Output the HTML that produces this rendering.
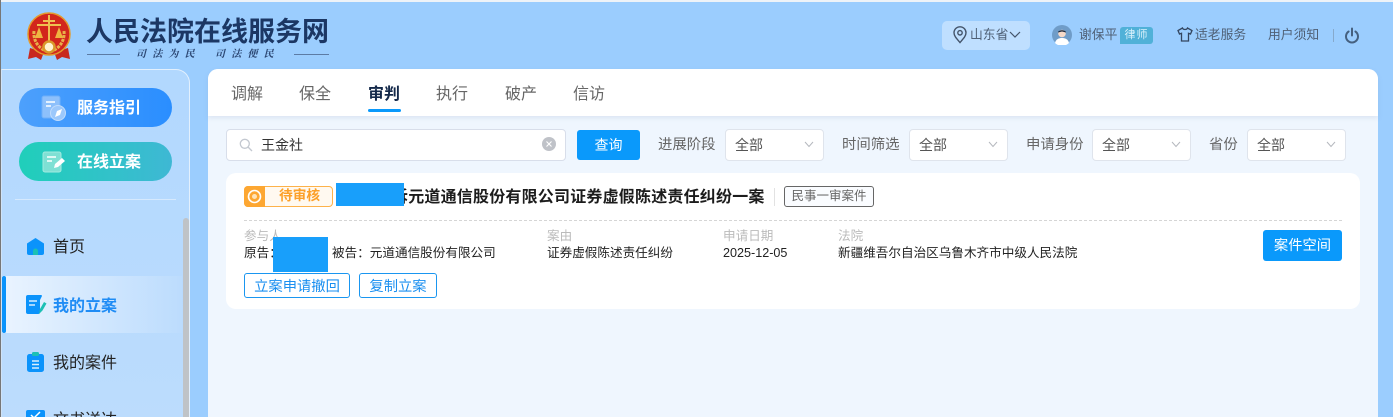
<!DOCTYPE html>
<html lang="zh"><head><meta charset="utf-8"><title>人民法院在线服务网</title>
<style>
*{box-sizing:border-box;margin:0;padding:0}
html,body{width:1393px;height:417px;overflow:hidden}
body{position:relative;background:#9bcdfe;font-family:"Liberation Sans","Noto Sans CJK SC",sans-serif;color:#222}
.a{position:absolute;white-space:nowrap}
.t{font-size:12.6px;line-height:18px}
.h{font-size:12.8px;color:#4f6076}
.sel{position:absolute;top:129px;width:99px;height:32px;background:#fff;border:1px solid #dfe4ec;border-radius:4px;font-size:14px;line-height:30px;padding-left:9px;color:#555}
.sel svg{position:absolute;right:9px;top:11px}
.lab{position:absolute;top:136px;font-size:14.4px;line-height:18px;color:#666}
.tab{position:absolute;top:84px;font-size:16px;line-height:22px;color:#666}
.g{color:#bbb}
.nav{font-size:16px;line-height:21px;color:#222}
</style></head><body>
<div class="a" style="left:0;top:0;width:1393px;height:2px;background:#eef3f8"></div>
<div class="a" style="left:0;top:0;width:1px;height:417px;background:#777"></div>

<svg class="a" style="left:27px;top:11px" width="44" height="50" viewBox="0 0 44 50">
<path d="M3 37l-2 11 8-2 5 3 3-8zM41 37l2 11-8-2-5 3-3-8z" fill="#c8281e"/>
<circle cx="22" cy="23" r="21" fill="#d2261c"/><circle cx="22" cy="23" r="21" fill="none" stroke="#e49a2c" stroke-width="1.500"/>
<path d="M7 20c-1 9 4 17 12 20M37 20c1 9-4 17-12 20" fill="none" stroke="#e8b04a" stroke-width="3" stroke-dasharray="3 1"/>
<path d="M21 4h2v5h5v2h-5v21h-2V11h-5V9h5zM10 13h24v2H10z" fill="#efc050"/>
<path d="M8 27l4-11 4 11zM28 27l4-11 4 11z" fill="#efb440"/>
<circle cx="22" cy="36" r="5.500" fill="#fff3d0" stroke="#d9982a" stroke-width="2.500"/>
</svg>

<div class="a" style="left:86px;top:16px;font-size:27px;line-height:32px;font-weight:700;color:#1c3764">人民法院在线服务网</div>
<div class="a" style="left:87px;top:54px;width:33px;height:1px;background:#5c7ba4"></div>
<div class="a" style="left:294px;top:54px;width:35px;height:1px;background:#5c7ba4"></div>
<div class="a" style="left:136px;top:48px;font-size:10px;line-height:14px;font-weight:700;font-style:italic;color:#2b4672;font-family:'Liberation Serif','Noto Serif CJK SC',serif;letter-spacing:6.2px">司法为民</div>
<div class="a" style="left:215px;top:48px;font-size:10px;line-height:14px;font-weight:700;font-style:italic;color:#2b4672;font-family:'Liberation Serif','Noto Serif CJK SC',serif;letter-spacing:6.2px">司法便民</div>

<div class="a" style="left:942px;top:21px;width:88px;height:29px;border-radius:5px;background:#bfdfff"></div>
<svg class="a" style="left:952px;top:26px" width="16" height="18" viewBox="0 0 16 18" fill="none" stroke="#44546a" stroke-width="1.400"><path d="M8 16.500C4.500 12.500 2 10 2 6.800a6 6 0 0 1 12 0C14 10 11.500 12.500 8 16.500z"/><circle cx="8" cy="6.800" r="2.200"/></svg>
<div class="a t h" style="left:970px;top:26px">山东省</div>
<svg class="a" style="left:1009px;top:31px" width="12" height="8" viewBox="0 0 12 8" fill="none" stroke="#44546a" stroke-width="1.200"><path d="M1 1l5 5 5-5"/></svg>

<svg class="a" style="left:1052px;top:25px" width="20" height="20" viewBox="0 0 20 20"><circle cx="10" cy="10" r="10" fill="#6f9cc8"/><path d="M3 18c1-4 4-5 7-5s6 1 7 5a10 10 0 0 1-14 0z" fill="#fff"/><circle cx="10" cy="8.500" r="3.800" fill="#f6d9c8"/><path d="M6 7.500C6 4.500 14 4.500 14 7.500L10 6.500z" fill="#1f2c3f"/></svg>
<div class="a t h" style="left:1079px;top:26px">谢保平</div>
<div class="a" style="left:1120px;top:27px;width:33px;height:17px;background:#50b1d8;border-radius:3px 3px 3px 0;color:#d8f1fb;font-size:11px;line-height:17px;text-align:center;letter-spacing:1px">律师</div>

<svg class="a" style="left:1177px;top:27px" width="16" height="15" viewBox="0 0 16 15" fill="none" stroke="#33455f" stroke-width="1.300"><path d="M5.500 1L1 3.500 2.500 7l2-.7V14h7V6.300l2 .7L15 3.500 10.500 1C10 3 6 3 5.500 1z"/></svg>
<div class="a t h" style="left:1195px;top:26px">适老服务</div>
<div class="a t h" style="left:1268px;top:26px">用户须知</div>
<div class="a" style="left:1333px;top:29px;width:1px;height:13px;background:#86a9cc"></div>
<svg class="a" style="left:1344px;top:27px" width="16" height="17" viewBox="0 0 16 17" fill="none" stroke="#45607f" stroke-width="2" stroke-linecap="round"><path d="M8 1.500v7M4.600 4.500a6 6 0 1 0 6.800 0"/></svg>

<!-- sidebar -->
<div class="a" style="left:1px;top:69px;width:189px;height:360px;background:linear-gradient(180deg,#b2d8fe,#bcdcfd);border:1px solid #e3f0fd;border-left:1px solid #cfe3f8;border-radius:0 14px 0 0"></div>
<div class="a" style="left:19px;top:88px;width:153px;height:39px;border-radius:20px;background:linear-gradient(90deg,#4da0fc,#2a8eff)"></div>
<svg class="a" style="left:41px;top:95px" width="26" height="27" viewBox="0 0 26 27"><rect x="1" y="1" width="18" height="22" rx="2" fill="#8dc0fb" stroke="#6fb0fa"/><path d="M5 7h9M5 11h5" stroke="#fff" stroke-width="1.400"/><circle cx="17" cy="18" r="7.500" fill="#9cc8fb" stroke="#c0dcfc"/><path d="M21 14l-2 6-5 2 2-6z" fill="#fff"/></svg>
<div class="a" style="left:77px;top:98px;font-size:16px;line-height:21px;font-weight:700;color:#fff">服务指引</div>
<div class="a" style="left:19px;top:142px;width:153px;height:39px;border-radius:20px;background:linear-gradient(90deg,#20cfba,#3eb8d4)"></div>
<svg class="a" style="left:42px;top:151px" width="25" height="22" viewBox="0 0 25 22"><rect x="1" y="1" width="18" height="20" rx="2" fill="#7fe0d4" stroke="#a2eae0"/><path d="M5 6h9M5 10h5" stroke="#fff" stroke-width="1.400"/><path d="M12 17l1-4 7-6 3 3-7 6z" fill="#fff"/></svg>
<div class="a" style="left:77px;top:152px;font-size:16px;line-height:21px;font-weight:700;color:#fff">在线立案</div>
<div class="a" style="left:15px;top:199px;width:161px;height:1px;background:#d6e9fd"></div>

<svg class="a" style="left:26px;top:237px" width="19" height="19" viewBox="0 0 19 19"><path d="M9.500 1L18 6.500V16a2 2 0 0 1-2 2H3a2 2 0 0 1-2-2V6.500z" fill="#0b93fb"/><path d="M7 18v-4a2.500 2.500 0 0 1 5 0v4z" fill="#1cc0b4"/></svg>
<div class="a nav" style="left:53px;top:237px">首页</div>

<div class="a" style="left:2px;top:276px;width:180px;height:57px;background:linear-gradient(90deg,#eaf4ff,#bcdcfd)"></div>
<div class="a" style="left:2px;top:276px;width:4px;height:57px;background:#0a93fb;border-radius:2px"></div>
<svg class="a" style="left:26px;top:295px" width="21" height="20" viewBox="0 0 21 20"><path d="M2 0h13.500l.5 1-2 4v12a2 2 0 0 1-2 2H2a2 2 0 0 1-2-2V2a2 2 0 0 1 2-2z" fill="#0b93fb"/><path d="M3 6h8M3 10h6" stroke="#fff" stroke-width="1.300"/><path d="M13 19l1-5 4-7 2.500 1.500-4 7z" fill="#1cc0b4"/></svg>
<div class="a nav" style="left:53px;top:296px;font-weight:700;color:#1f8cf5">我的立案</div>

<svg class="a" style="left:27px;top:352px" width="17" height="20" viewBox="0 0 17 20"><rect x="0" y="2" width="17" height="18" rx="2.500" fill="#0b93fb"/><rect x="5" y="0" width="7" height="4" rx="1.500" fill="#1cc0b4"/><path d="M5 9h7M5 12.500h7M5 16h7" stroke="#d8eefe" stroke-width="1.400"/></svg>
<div class="a nav" style="left:53px;top:353px">我的案件</div>

<svg class="a" style="left:26px;top:410px" width="19" height="10" viewBox="0 0 19 10"><rect width="19" height="10" rx="2" fill="#0b93fb"/><path d="M5 5l3 3 6-6" stroke="#fff" stroke-width="1.500" fill="none"/></svg>
<div class="a nav" style="left:53px;top:410px">文书送达</div>
<div class="a" style="left:183px;top:218px;width:6px;height:199px;background:#bfc3c7;border-radius:3px 3px 0 0"></div>

<!-- main -->
<div class="a" style="left:208px;top:69px;width:1170px;height:348px;background:#eff6fe;border-radius:10px 10px 0 0"></div>
<div class="a" style="left:208px;top:69px;width:1170px;height:47px;background:#fff;border-radius:10px 10px 0 0;box-shadow:0 2px 5px rgba(120,150,190,.18)"></div>
<div class="tab" style="left:231px">调解</div>
<div class="tab" style="left:299px">保全</div>
<div class="tab" style="left:368px;color:#14294a;font-weight:700">审判</div>
<div class="a" style="left:368px;top:109px;width:33px;height:3px;background:#0a99fb;border-radius:2px"></div>
<div class="tab" style="left:436px">执行</div>
<div class="tab" style="left:505px">破产</div>
<div class="tab" style="left:573px">信访</div>

<div class="a" style="left:226px;top:129px;width:340px;height:32px;background:#fff;border:1px solid #d8deea;border-radius:4px"></div>
<svg class="a" style="left:239px;top:138px" width="14" height="14" viewBox="0 0 14 14" fill="none" stroke="#c3c8d0" stroke-width="1.300"><circle cx="5.800" cy="5.800" r="4.500"/><path d="M9 9l4 4"/></svg>
<div class="a" style="left:261px;top:136px;font-size:14px;line-height:19px;color:#333">王金社</div>
<svg class="a" style="left:542px;top:137px" width="14" height="14" viewBox="0 0 14 14"><circle cx="7" cy="7" r="7" fill="#bfc2c8"/><path d="M4.500 4.500l5 5M9.500 4.500l-5 5" stroke="#fff" stroke-width="1.100"/></svg>
<div class="a" style="left:577px;top:130px;width:63px;height:30px;background:#0a99fb;border-radius:3px;color:#fff;font-size:14px;line-height:30px;text-align:center">查询</div>

<div class="lab" style="left:658px">进展阶段</div>
<div class="sel" style="left:725px">全部<svg width="10" height="7" viewBox="0 0 10 7" fill="none" stroke="#b5b8be"><path d="M1 1l4 4.500L9 1"/></svg></div>
<div class="lab" style="left:842px">时间筛选</div>
<div class="sel" style="left:909px">全部<svg width="10" height="7" viewBox="0 0 10 7" fill="none" stroke="#b5b8be"><path d="M1 1l4 4.500L9 1"/></svg></div>
<div class="lab" style="left:1026px">申请身份</div>
<div class="sel" style="left:1092px">全部<svg width="10" height="7" viewBox="0 0 10 7" fill="none" stroke="#b5b8be"><path d="M1 1l4 4.500L9 1"/></svg></div>
<div class="lab" style="left:1209px">省份</div>
<div class="sel" style="left:1247px">全部<svg width="10" height="7" viewBox="0 0 10 7" fill="none" stroke="#b5b8be"><path d="M1 1l4 4.500L9 1"/></svg></div>

<!-- card -->
<div class="a" style="left:226px;top:173px;width:1134px;height:136px;background:#fff;border-radius:10px"></div>
<div class="a" style="left:244px;top:186px;width:89px;height:21px;background:#fff9f0;border:1px solid #fdb24a;border-radius:4px"></div>
<div class="a" style="left:244px;top:186px;width:21px;height:21px;background:#fda732;border-radius:4px 0 0 4px"></div>
<svg class="a" style="left:247px;top:189px" width="15" height="15" viewBox="0 0 15 15" fill="none"><circle cx="7.500" cy="7.500" r="6" stroke="#fff" stroke-width="1.600"/><circle cx="7.500" cy="7.500" r="2.500" fill="#ffe3b8"/></svg>
<div class="a" style="left:279px;top:186px;font-size:13.7px;line-height:19px;font-weight:700;color:#fca029">待审核</div>
<div class="a" style="left:392px;top:187px;font-size:16px;line-height:22px;font-weight:700;color:#1c1c1c;letter-spacing:.2px">诉元道通信股份有限公司证券虚假陈述责任纠纷一案</div>
<div class="a" style="left:336px;top:183px;width:68px;height:23px;background:#189ffb"></div>
<div class="a" style="left:774px;top:188px;width:1px;height:18px;background:#e2e2e2"></div>
<div class="a" style="left:784px;top:186px;width:90px;height:21px;border:1px solid #666;border-radius:3px;background:#fafcff;font-size:12.5px;line-height:18px;text-align:center;color:#666">民事一审案件</div>
<div class="a" style="left:244px;top:220px;width:1098px;height:0;border-top:1px dashed #d5d5d5"></div>

<div class="a t g" style="left:244px;top:227px">参与人</div>
<div class="a t" style="left:244px;top:244px">原告：</div>
<div class="a" style="left:273px;top:237px;width:55px;height:35px;background:#189ffb"></div>
<div class="a t" style="left:332px;top:244px">被告：元道通信股份有限公司</div>
<div class="a t g" style="left:547px;top:227px">案由</div>
<div class="a t" style="left:547px;top:244px">证券虚假陈述责任纠纷</div>
<div class="a t g" style="left:723px;top:227px">申请日期</div>
<div class="a t" style="left:723px;top:244px">2025-12-05</div>
<div class="a t g" style="left:838px;top:227px">法院</div>
<div class="a t" style="left:838px;top:244px">新疆维吾尔自治区乌鲁木齐市中级人民法院</div>
<div class="a" style="left:1263px;top:230px;width:79px;height:31px;background:#0a99fb;border-radius:3px;color:#fff;font-size:14.3px;line-height:32px;text-align:center">案件空间</div>
<div class="a" style="left:244px;top:273px;width:106px;height:25px;border:1px solid #1a96f0;border-radius:3px;color:#1a8ff0;font-size:14.3px;line-height:26px;text-align:center">立案申请撤回</div>
<div class="a" style="left:359px;top:273px;width:78px;height:25px;border:1px solid #1a96f0;border-radius:3px;color:#1a8ff0;font-size:14.3px;line-height:26px;text-align:center">复制立案</div>
</body></html>
